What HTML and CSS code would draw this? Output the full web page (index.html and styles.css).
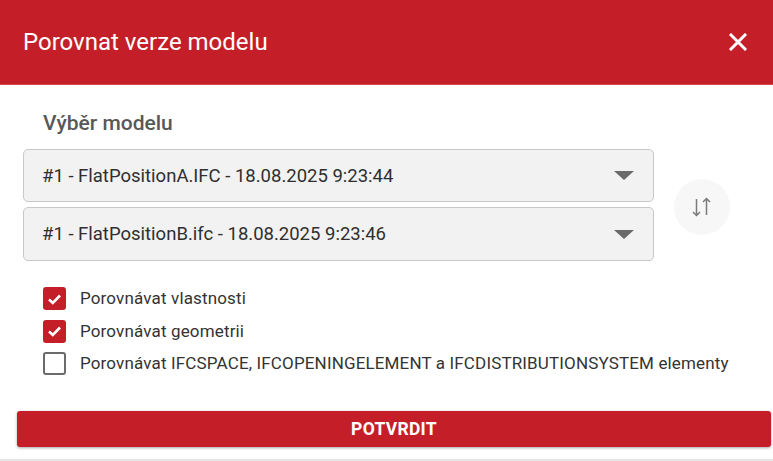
FILE: index.html
```html
<!DOCTYPE html>
<html lang="cs">
<head>
<meta charset="utf-8">
<title>Porovnat verze modelu</title>
<link rel="stylesheet" href="styles.css">
</head>
<body>
<div class="dialog">
  <header class="header">
    <h1 class="title">Porovnat verze modelu</h1>
    <button class="close" aria-label="Zavřít">
      <svg width="18" height="18" viewBox="0 0 18 18"><path d="M2 2 L16 16 M16 2 L2 16" stroke="#fff" stroke-width="3" stroke-linecap="square"/></svg>
    </button>
  </header>
  <main class="content">
    <div class="section-title">Výběr modelu</div>
    <div class="model-row">
      <div class="selects">
        <div class="select first"><span>#1 - FlatPositionA.IFC - 18.08.2025 9:23:44</span><span class="caret"></span></div>
        <div class="select"><span>#1 - FlatPositionB.ifc - 18.08.2025 9:23:46</span><span class="caret"></span></div>
      </div>
      <button class="swap" aria-label="Prohodit">
        <svg width="20" height="20" viewBox="0 -2 20 20" fill="none" stroke="#7a7a7a" stroke-width="1.5">
          <path d="M4.5 0 V16.5 M1 13 L4.5 16.5 L8 13"/>
          <path d="M14.5 16 V-0.5 M11 3 L14.5 -0.5 L18 3"/>
        </svg>
      </button>
    </div>
    <div class="checks">
      <label class="check"><span class="box checked"><svg width="15" height="12" viewBox="0 0 15 12"><path d="M2 6.5 L5.8 10 L13 2.5" fill="none" stroke="#fff" stroke-width="2.6"/></svg></span>Porovnávat vlastnosti</label>
      <label class="check"><span class="box checked"><svg width="15" height="12" viewBox="0 0 15 12"><path d="M2 6.5 L5.8 10 L13 2.5" fill="none" stroke="#fff" stroke-width="2.6"/></svg></span>Porovnávat geometrii</label>
      <label class="check"><span class="box"></span>Porovnávat IFCSPACE, IFCOPENINGELEMENT a IFCDISTRIBUTIONSYSTEM elementy</label>
    </div>
    <button class="confirm">POTVRDIT</button>
  </main>
</div>
</body>
</html>
```
FILE: styles.css
```css
* { box-sizing: border-box; }
html, body { margin: 0; padding: 0; background: #fff; }
body { font-family: Roboto, "Noto Sans", Arial, sans-serif; width: 773px; height: 461px; overflow: hidden; }
.dialog { width: 773px; height: 461px; border-bottom: 2px solid #e6e6e6; }
.header {
  height: 85px;
  background: #c41f28;
  display: flex;
  align-items: center;
  justify-content: space-between;
  padding: 0 26px 0 23px;
  border-bottom: 1px solid #d9484e;
}
.title { margin: 0; font-size: 24px; font-weight: 400; color: #fff; line-height: 28px; }
.close { background: none; border: 0; padding: 0; display: flex; cursor: pointer; }
.content { padding: 0; }
.section-title {
  margin: 26px 0 0 43px;
  font-size: 21px;
  font-weight: 500;
  color: #585858;
  line-height: 24px;
}
.model-row { display: flex; align-items: center; margin: 14px 0 0 23px; }
.selects { width: 631px; display: flex; flex-direction: column; gap: 5px; }
.select {
  height: 54px;
  background: #f2f2f2;
  border: 1px solid #c8c8c8;
  border-radius: 5px;
  display: flex;
  align-items: center;
  justify-content: space-between;
  padding: 0 19px 0 18px;
  font-size: 18.5px;
  color: #2f2f2f;
}
.select.first { height: 53px; }
.caret {
  width: 0; height: 0;
  border-left: 10px solid transparent;
  border-right: 10px solid transparent;
  border-top: 9px solid #6a6a6a;
}
.swap {
  margin: 4px 0 0 20px;
  width: 56px; height: 56px;
  border-radius: 50%;
  border: 0;
  background: #f7f7f7;
  display: flex; align-items: center; justify-content: center;
  padding: 0;
}
.checks { margin: 26px 0 0 43px; display: flex; flex-direction: column; gap: 9.5px; }
.check { display: flex; align-items: center; gap: 14px; font-size: 17px; letter-spacing: 0.15px; color: #333; line-height: 23px; }
.box {
  width: 23px; height: 23px;
  border: 2px solid #6b6b6b;
  border-radius: 3px;
  display: flex; align-items: center; justify-content: center;
  flex: none;
}
.box.checked { background: #c41f28; border-color: #c41f28; }
.confirm {
  display: block;
  margin: 36px 0 0 17px;
  width: 754px;
  height: 36px;
  background: #c41f28;
  color: #fff;
  border: 0;
  border-radius: 3px;
  box-shadow: 0 1px 3px rgba(0,0,0,0.35);
  font-family: Roboto, Arial, sans-serif;
  font-size: 17.5px;
  font-weight: 700;
  letter-spacing: 0.3px;
}
```
